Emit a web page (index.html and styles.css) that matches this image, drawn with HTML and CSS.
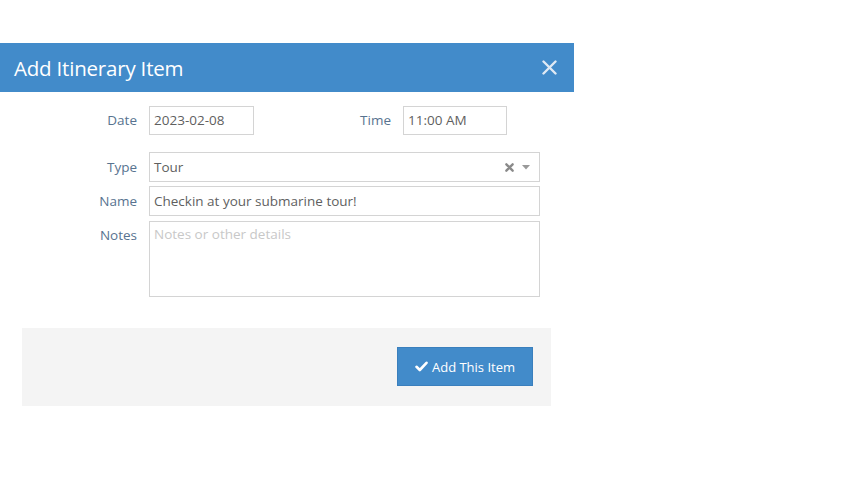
FILE: index.html
```html
<!DOCTYPE html>
<html>
<head>
<meta charset="utf-8">
<link rel="stylesheet" href="styles.css">
</head>
<body>
<div class="modal">
  <div class="header">
    <span class="title">Add Itinerary Item</span>
    <svg class="close" width="15" height="15" viewBox="0 0 15 15"><path d="M1.5 1.5 L13.5 13.5 M13.5 1.5 L1.5 13.5" stroke="#dfe9f4" stroke-width="2.4" stroke-linecap="round"/></svg>
  </div>
  <div class="form">
    <div class="row row-date">
      <label class="lbl">Date</label>
      <div class="input small">2023-02-08</div>
      <label class="lbl">Time</label>
      <div class="input small time">11:00 AM</div>
    </div>
    <div class="row row-type">
      <label class="lbl">Type</label>
      <div class="input wide select">
        <span>Tour</span>
        <span class="sel-icons">
          <svg class="x-ic" width="9" height="9" viewBox="0 0 10 10"><path d="M1.5 1.5 L8.5 8.5 M8.5 1.5 L1.5 8.5" stroke="#8a8a8a" stroke-width="2.6" stroke-linecap="round"/></svg>
          <svg class="caret" width="8" height="5" viewBox="0 0 8 5"><path d="M0 0 L8 0 L4 4.5 Z" fill="#999"/></svg>
        </span>
      </div>
    </div>
    <div class="row row-name">
      <label class="lbl">Name</label>
      <div class="input wide">Checkin at your submarine tour!</div>
    </div>
    <div class="row row-notes">
      <label class="lbl">Notes</label>
      <div class="input wide notes placeholder">Notes or other details</div>
    </div>
  </div>
  <div class="footer">
    <button class="btn">
      <svg width="13" height="11" viewBox="0 0 13 11"><path d="M1.5 5.8 L4.8 9 L11.5 1.8" fill="none" stroke="#fff" stroke-width="2.6" stroke-linecap="round" stroke-linejoin="round"/></svg>
      Add This Item
    </button>
  </div>
</div>
</body>
</html>
```
FILE: styles.css
```css
html, body {
  margin: 0;
  padding: 0;
  background: #fff;
}
body {
  font-family: "Open Sans", "Liberation Sans", sans-serif;
  font-size: 13.5px;
  color: #5f5f5f;
  padding-top: 43px;
}
.modal {
  width: 574px;
}
.header {
  height: 49px;
  background: #428bca;
  display: flex;
  align-items: center;
  justify-content: space-between;
  padding: 0 17px 0 14px;
  box-sizing: border-box;
}
.title {
  color: #fff;
  font-size: 20.5px;
  letter-spacing: -0.2px;
}
.form {
  padding-top: 14px;
}
.row {
  display: flex;
  align-items: flex-start;
}
.lbl {
  width: 137px;
  text-align: right;
  color: #587390;
  margin-right: 12px;
  line-height: 29px;
  flex: none;
}
.input {
  box-sizing: border-box;
  border: 1px solid #d4d4d4;
  height: 29px;
  line-height: 27px;
  padding: 0 4px;
  color: #5f5f5f;
  background: #fff;
}
.small { width: 105px; }
.time { width: 104px; }
.wide { width: 391px; }
.row-type { margin-top: 17px; }
.row-type .input { height: 30px; line-height: 28px; }
.row-type .lbl { line-height: 30px; }
.row-name { margin-top: 4px; }
.row-name .input { height: 30px; line-height: 28px; }
.row-name .lbl { line-height: 30px; }
.row-notes { margin-top: 5px; }
.row-notes .lbl { line-height: 28px; }
.notes {
  height: 76px;
  line-height: 24px;
}
.placeholder { color: #c8c8c8; }
.select {
  display: flex;
  justify-content: space-between;
  align-items: center;
}
.sel-icons {
  display: flex;
  align-items: center;
  gap: 8px;
  padding-right: 5px;
}
.footer {
  margin: 31px 0 0 22px;
  width: 529px;
  height: 78px;
  background: #f4f4f4;
  box-sizing: border-box;
  padding: 19px 18px 0 0;
  display: flex;
  justify-content: flex-end;
  align-items: flex-start;
}
.btn {
  width: 136px;
  height: 39px;
  background: #428bca;
  border: 1px solid #3a7fbd;
  color: #fff;
  font-family: "Open Sans", "Liberation Sans", sans-serif;
  font-size: 13px;
  display: flex;
  align-items: center;
  justify-content: center;
  gap: 4px;
  padding: 0;
}
```
